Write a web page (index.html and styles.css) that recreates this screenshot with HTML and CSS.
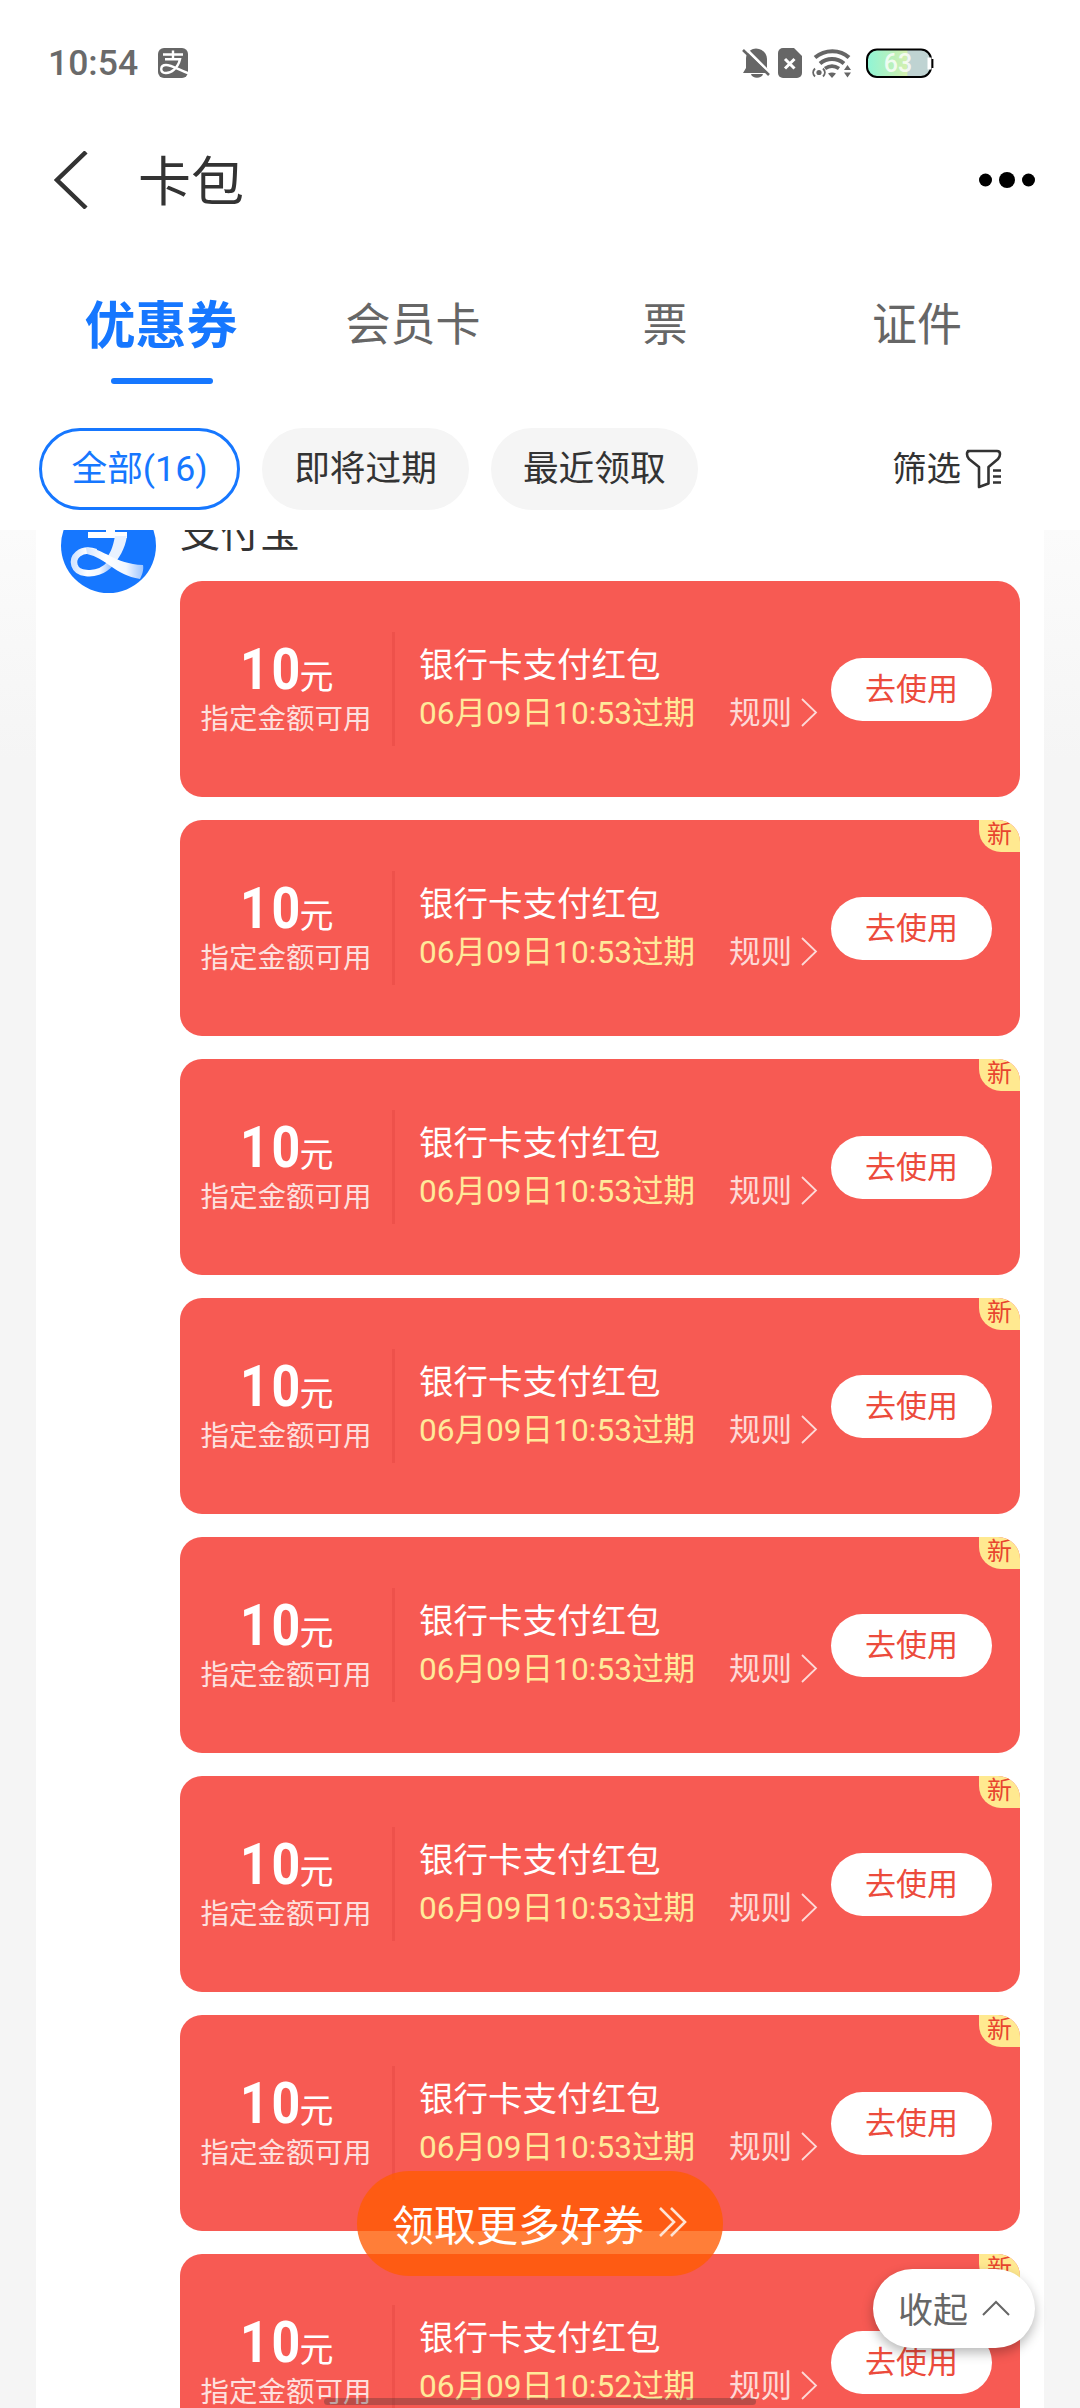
FILE: index.html
```html
<!DOCTYPE html>
<html lang="zh-CN">
<head>
<meta charset="utf-8">
<title>卡包</title>
<link rel="stylesheet" href="styles.css">
</head>
<body>
<svg class="defs" width="0" height="0">
  <symbol id="arrow" viewBox="0 0 17 29"><path d="M1 1 15 14.500 1 28" fill="none" stroke="currentColor" stroke-width="1.800"/></symbol>
</svg>
<div class="screen">
  <header class="status">
    <span class="time">10:54</span>
    <svg class="pay" width="30" height="30" viewBox="0 0 30 30"><rect width="30" height="30" rx="6" fill="#666"/><path fill="none" stroke="#fff" stroke-width="2.400" d="M5 6.500h20M15 2.500v8M7 11.300h15C20 20 13 25.500 7.500 25 1.500 24.500 2 17 8 17c6 0 13 5 23 8.500"/></svg>
    <svg class="sys" width="192" height="31" viewBox="0 0 192 31">
      <path fill="#666" d="M1 25 4 20V11C4 5 8 2 11 1a10 10 0 0 1 6 0C21 2 25 6 25 11v9l3 5zM9 26h12c-1 5-11 5-12 0z"/>
      <path d="M3 0 30 27" stroke="#fff" stroke-width="3"/><path d="M1 2 27 27" stroke="#666" stroke-width="2.600"/>
      <path fill="#666" d="M41 0h11l8 8v17a5 5 0 0 1-5 5H41a5 5 0 0 1-5-5V5a5 5 0 0 1 5-5z"/>
      <path d="m43 11 9.500 9.500m0-9.500L43 20.500" stroke="#fff" stroke-width="3"/>
      <g fill="none" stroke="#666">
        <path stroke-width="4" d="M73 9.500C83 1 98 1 107 9.500M78 15.500c7-6 17-6 24 0"/>
        <path stroke-width="3.600" d="M83 20.500c5-3.500 9-3.500 14 0"/>
        <path stroke-width="1.800" d="M73 20.500c-2.500 2.500-2.500 5.500 0 8M81 20.500c2.500 2.500 2.500 5.500 0 8"/>
      </g>
      <path fill="#666" d="m86 25.500c2.500-1.500 5.500-1.500 8 0l-4 4.500zM102 22l3.500-5 3.500 5zM102 24.500h7l-3.500 5z"/>
      <circle cx="77" cy="24.500" r="2.600" fill="#666"/>
      <defs><linearGradient id="charge"><stop offset="0" stop-color="#8ff5d6"/><stop offset=".45" stop-color="#bff0b8"/><stop offset=".62" stop-color="#d4f0b0"/><stop offset=".64" stop-color="#bfd3d2"/><stop offset="1" stop-color="#bfd3d2"/></linearGradient></defs>
      <rect x="125" y="1.500" width="64" height="27.500" rx="10" fill="url(#charge)" stroke="#000" stroke-width="2"/>
      <path d="M187.500 9.500v12" stroke="#fff" stroke-width="4"/><path d="M190.500 11v9" stroke="#000" stroke-width="1.800"/>
      <text class="level" x="156" y="23.500" text-anchor="middle">63</text>
    </svg>
  </header>

  <nav class="navbar">
    <svg width="34" height="58" viewBox="0 0 34 58"><path d="M32 1 3 29 32 57" fill="none" stroke="#333" stroke-width="4.500"/></svg>
    <h1>卡包</h1>
    <svg class="more" width="56" height="16" viewBox="0 0 56 16"><circle cx="6.500" cy="8" r="6.500"/><circle cx="28" cy="8" r="8"/><circle cx="49.500" cy="8" r="6.500"/></svg>
  </nav>

  <div class="tabs">
    <div class="tab active"><span>优惠券</span></div>
    <div class="tab"><span>会员卡</span></div>
    <div class="tab"><span>票</span></div>
    <div class="tab"><span>证件</span></div>
  </div>

  <div class="filters">
    <span class="chip on">全部(16)</span>
    <span class="chip">即将过期</span>
    <span class="chip">最近领取</span>
    <span class="sift">筛选
      <svg width="37" height="40" viewBox="0 0 37 40" fill="none" stroke="#333" stroke-width="2.600"><path stroke-linejoin="round" d="M3 2h29q3 0 3 3 0 3-2 5L23.500 18v16.500L14 38V18L4 10Q2 8 2 5q0-3 3-3z"/><path d="M28 21.500h8M28 27.500h8M28 33.500h8"/></svg>
    </span>
  </div>

  <main class="content">
    <section class="merchant">
      <svg class="logo" width="95" height="95" viewBox="0 0 95 95">
        <defs><linearGradient id="band"><stop offset="0" stop-color="#d5e6ff"/><stop offset=".35" stop-color="#fff"/><stop offset=".7" stop-color="#f2f7ff"/><stop offset="1" stop-color="#9cc4ff"/></linearGradient></defs>
        <circle cx="47.500" cy="47.500" r="47.500" fill="#1677ff"/>
        <path fill="#fff" d="M45 18h9v18h-9zM27 34h39v6H27z"/>
        <path fill="#e9f2ff" d="M54 38h12C64 51 58 61 51 68l-8-5c6-6 9-14 11-25z"/>
        <path fill="none" stroke="url(#band)" stroke-width="6.500" d="M50 65C42 74 32 76 25 75 12 74 10 62 17 56 22 52 29 52 35 54"/>
        <path fill="url(#band)" d="M25 50c16-1 28 16 57 17 1 5-1 10-3 14-25-4-34-21-53-25z"/>
      </svg>
      <div class="coupons">
        <h2>支付宝</h2>
        <article class="coupon"><div class="amount"><p class="sum"><b>10</b>元</p><p class="limit">指定金额可用</p></div><div class="info"><h3>银行卡支付红包</h3><p class="meta"><time>06月09日10:53过期</time><span class="rule">规则<svg><use href="#arrow"/></svg></span></p></div><button>去使用</button></article>
        <article class="coupon"><div class="amount"><p class="sum"><b>10</b>元</p><p class="limit">指定金额可用</p></div><div class="info"><h3>银行卡支付红包</h3><p class="meta"><time>06月09日10:53过期</time><span class="rule">规则<svg><use href="#arrow"/></svg></span></p></div><button>去使用</button><i class="new">新</i></article>
        <article class="coupon"><div class="amount"><p class="sum"><b>10</b>元</p><p class="limit">指定金额可用</p></div><div class="info"><h3>银行卡支付红包</h3><p class="meta"><time>06月09日10:53过期</time><span class="rule">规则<svg><use href="#arrow"/></svg></span></p></div><button>去使用</button><i class="new">新</i></article>
        <article class="coupon"><div class="amount"><p class="sum"><b>10</b>元</p><p class="limit">指定金额可用</p></div><div class="info"><h3>银行卡支付红包</h3><p class="meta"><time>06月09日10:53过期</time><span class="rule">规则<svg><use href="#arrow"/></svg></span></p></div><button>去使用</button><i class="new">新</i></article>
        <article class="coupon"><div class="amount"><p class="sum"><b>10</b>元</p><p class="limit">指定金额可用</p></div><div class="info"><h3>银行卡支付红包</h3><p class="meta"><time>06月09日10:53过期</time><span class="rule">规则<svg><use href="#arrow"/></svg></span></p></div><button>去使用</button><i class="new">新</i></article>
        <article class="coupon"><div class="amount"><p class="sum"><b>10</b>元</p><p class="limit">指定金额可用</p></div><div class="info"><h3>银行卡支付红包</h3><p class="meta"><time>06月09日10:53过期</time><span class="rule">规则<svg><use href="#arrow"/></svg></span></p></div><button>去使用</button><i class="new">新</i></article>
        <article class="coupon"><div class="amount"><p class="sum"><b>10</b>元</p><p class="limit">指定金额可用</p></div><div class="info"><h3>银行卡支付红包</h3><p class="meta"><time>06月09日10:53过期</time><span class="rule">规则<svg><use href="#arrow"/></svg></span></p></div><button>去使用</button><i class="new">新</i></article>
        <article class="coupon"><div class="amount"><p class="sum"><b>10</b>元</p><p class="limit">指定金额可用</p></div><div class="info"><h3>银行卡支付红包</h3><p class="meta"><time>06月09日10:52过期</time><span class="rule">规则<svg><use href="#arrow"/></svg></span></p></div><button>去使用</button><i class="new">新</i></article>
      </div>
    </section>
  </main>

  <div class="get-more">领取更多好券<svg width="30" height="32" viewBox="0 0 30 32" fill="none" stroke="#ffe3d4" stroke-width="2.600"><path d="M2 2 16 16 2 30M13 2 27 16 13 30"/></svg></div>
  <div class="collapse">收起<svg width="28" height="16" viewBox="0 0 28 16" fill="none" stroke="#666" stroke-width="2"><path d="M1 15 14 2 27 15"/></svg></div>
  <div class="home-bar"></div>
</div>
</body>
</html>
```
FILE: styles.css
```css
* { box-sizing: border-box; margin: 0; padding: 0; }
body { background: #fff; font-family: Roboto, "Noto Sans CJK SC", sans-serif; color: #333; }
svg { display: block; flex: none; }
.defs { position: absolute; }
.screen { position: relative; display: flex; flex-direction: column; width: 1080px; height: 2408px; overflow: hidden; }

.status { display: flex; align-items: center; height: 126px; padding: 0 146px 0 48px; }
.time { font-size: 35.500px; font-weight: 500; color: #6a6a6a; line-height: 40px; }
.pay { margin-left: 20px; }
.sys { margin-left: auto; }
.level { font: 500 25px Roboto, sans-serif; fill: #fff; fill-opacity: .8; }

.navbar { display: flex; align-items: center; height: 108px; padding: 0 45px 0 54px; }
.navbar h1 { margin-left: 50px; padding-top: 5px; font-size: 53px; font-weight: 400; line-height: 70px; }
.more { margin-left: auto; }

.tabs { display: flex; height: 182px; padding: 0 37px 0 35px; }
.tab { position: relative; flex: 1; height: 182px; text-align: center; font-size: 45px; line-height: 184px; color: #666; }
.tab.active { font-size: 51px; font-weight: 600; color: #1677ff; line-height: 185px; }
.tab.active::after { content: ""; position: absolute; left: 76px; top: 144px; width: 102px; height: 6px; border-radius: 3px; background: #1677ff; }

.filters { display: flex; align-items: center; height: 114px; padding: 0 78px 8px 39px; gap: 22px; }
.chip { height: 82px; padding: 0 32px; border-radius: 41px; background: #f5f5f5; font-size: 35.700px; line-height: 82px; }
.chip.on { padding: 0 29.500px; border: 3px solid #1677ff; background: #fff; color: #1677ff; line-height: 77px; }
.sift { display: flex; align-items: center; gap: 4px; margin-left: auto; font-size: 34.500px; line-height: 50px; }

.content { flex: 1; min-height: 0; overflow: hidden; padding: 0 36px; background: linear-gradient(#fbfbfb, #f5f5f5 230px); }
.merchant { display: flex; align-items: flex-start; gap: 24px; margin-top: -33px; padding: 0 24px 0 25px; height: 2000px; background: #fff; }
.logo { margin-top: 1px; }
.coupons { flex: 1; display: flex; flex-direction: column; gap: 23px; }
.coupons h2 { height: 61px; font-size: 40px; font-weight: 400; line-height: 73px; }

.coupon { position: relative; display: flex; align-items: center; flex: none; height: 216px; padding-right: 28px; border-radius: 22px; overflow: hidden; background: #f75a53; color: #fff; }
.amount { width: 215px; height: 114px; border-right: 3px solid #ee514b; text-align: center; }
.sum { display: flex; justify-content: center; align-items: baseline; height: 70px; padding-top: 8px; font-size: 34px; line-height: 60px; }
.sum b { width: 60px; margin-left: 1px; font-size: 57px; font-weight: 700; letter-spacing: 3px; transform: scaleX(.88); transform-origin: left; }
.limit { font-size: 28.500px; line-height: 35px; color: #fde0de; white-space: nowrap; }
.info { flex: 1; height: 114px; padding-left: 24px; }
.info h3 { height: 59px; font-size: 34.500px; font-weight: 400; line-height: 66px; }
.meta { display: flex; align-items: center; font-size: 31.600px; line-height: 46px; white-space: nowrap; }
.meta time { width: 310px; color: #ffe99a; }
.rule { display: flex; align-items: center; gap: 9px; color: #fdd9d7; }
.rule svg { width: 17px; height: 29px; margin-top: -3px; }
.coupon button { width: 161px; height: 63px; padding-bottom: 5px; border: 0; border-radius: 32px; background: #fff; font: 31px Roboto, "Noto Sans CJK SC", sans-serif; color: #ec4b3c; }
.new { position: absolute; top: 0; right: 0; width: 41px; height: 32px; border-bottom-left-radius: 22px; background: #ffe990; font-size: 25px; font-style: normal; line-height: 30px; text-align: center; color: #e8452f; }

.get-more { position: absolute; left: 357px; top: 2171px; display: flex; align-items: center; justify-content: center; gap: 14px; width: 366px; height: 105px; padding-bottom: 3px; border-radius: 53px; background: rgba(255, 91, 2, .79); font-size: 42px; color: #fff; }
.collapse { position: absolute; left: 873px; top: 2269px; display: flex; align-items: center; justify-content: center; gap: 14px; width: 162px; height: 79px; padding-bottom: 2px; border-radius: 40px; background: #fff; box-shadow: 0 5px 12px rgba(0, 0, 0, .28); font-size: 35px; color: #666; }
.home-bar { position: absolute; left: 324px; top: 2398px; width: 432px; height: 7px; border-radius: 4px; background: rgba(60, 50, 50, .33); }
```
